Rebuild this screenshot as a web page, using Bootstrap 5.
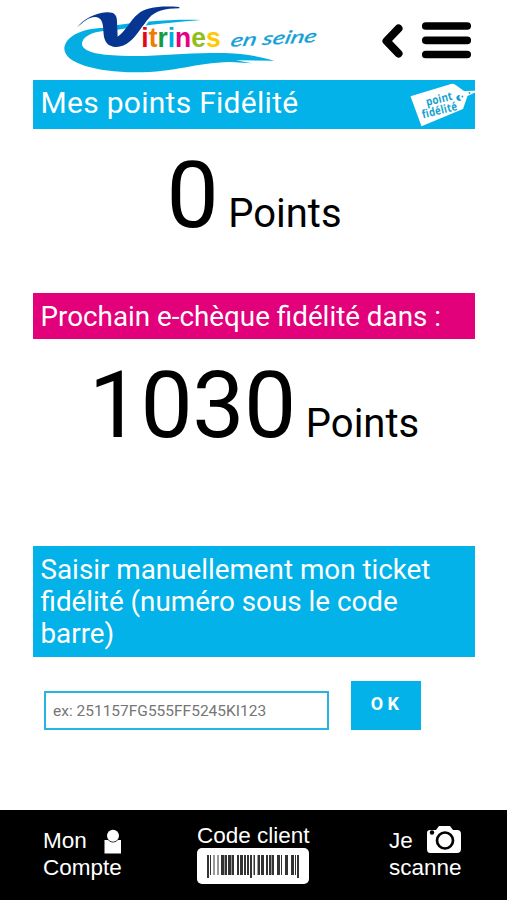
<!DOCTYPE html>
<html lang="fr">
<head>
<meta charset="utf-8">
<meta name="viewport" content="width=device-width, initial-scale=1">
<title>Vitrines en Seine</title>
<link href="https://cdn.jsdelivr.net/npm/bootstrap@5.3.0/dist/css/bootstrap.min.css" rel="stylesheet">
<style>
body{font-family:Roboto,sans-serif;color:#000;height:900px;overflow:hidden}
svg{display:block;flex:none}
.topbar{height:80px;padding-left:50px;padding-right:36px}
.brand-logo{margin-right:52px}
.page{padding:0 32px 0 33px}
.band{background:#02b2e8;color:#fff;font-size:27.8px;line-height:32px;padding:7.5px 0 0 7.5px}
.band-title{height:49px;font-size:30px;letter-spacing:.28px;padding-top:7px}
.band-pink{height:46px;margin-top:52px;background:#e3007b}
.band-form{height:111px;margin-top:95px}
.score{height:112px;line-height:112px;padding-top:11px}
.score-value{font-size:93px;margin-right:6px;letter-spacing:-.5px}
.score-unit{font-size:40px}
.ticket-form{padding:24px 0 0 11px}
.ticket-input{width:285px;height:39px;border:2px solid #25b5e0;border-radius:0;padding:0 7px;font-size:15.5px;color:#757575}
.ticket-input::placeholder{color:#757575;opacity:1}
.ok-btn{width:70px;height:49px;margin-left:22px;background:#02b2e8;color:#fff;border:0;border-radius:0;font-size:18px;font-weight:700;letter-spacing:4.4px;padding:0 0 4px 2px}
.ok-btn:hover{background:#0299c8;color:#fff}
.bottombar{height:90px;background:#000;color:#fff;font:22.5px/27px "Liberation Sans",Arial,sans-serif}
.bottombar a{color:#fff}
.nav-account{padding:17px 0 0 43px;width:197px}
.nav-code{width:192px;padding-top:12px}
.nav-code svg{margin-top:-2px}
.nav-scan{padding-top:17px}
.icon-person{margin:2px 0 0 -18px}
.icon-camera{margin:-2px 0 0 -36px}
</style>
<script src="https://cdn.jsdelivr.net/npm/bootstrap@5.3.0/dist/js/bootstrap.bundle.min.js"></script>
</head>
<body class="bg-white d-flex flex-column">
<header class="topbar d-flex align-items-start">
  <a href="#" class="brand-logo" aria-label="Vitrines en seine">
    <svg width="280" height="79" viewBox="0 0 840 237">
      <path fill="#04aee2" d="M165 84C85 84 43 116 43 147C45 190 138 216 255 217C384 217 431 188 540 186L606 190L558 181L673 182C602 163 560 158 493 159C393 158 312 172 213 167C145 166 96 154 96 132C96 110 125 96 165 92ZM198 76C260 66 365 57 453 60C388 66 299 72 198 90Z"/>
      <path d="M272 92L294 62" stroke="#fff" stroke-width="6"/>
      <path fill="#063592" d="M80 83C100 59 135 38 170 37C194 36 201 46 201 65L203 110C226 96 240 61 264 42C288 21 330 17 388 21V25C344 25 316 34 298 53C276 77 262 105 240 124C225 137 207 143 190 140C166 136 161 116 160 91C159 64 153 52 135 51C115 51 98 68 80 83Z"/>
      <text x="274" y="142" font-family="Liberation Sans,Arial,sans-serif" font-weight="700" font-size="84" textLength="238" lengthAdjust="spacingAndGlyphs"><tspan fill="#e3061a">i</tspan><tspan fill="#f17b08">t</tspan><tspan fill="#179b40">r</tspan><tspan fill="#00aee1">i</tspan><tspan fill="#e4007f">n</tspan><tspan fill="#91bd20">e</tspan><tspan fill="#fdc900">s</tspan></text>
      <text transform="translate(539 140) rotate(-3) skewX(-16)" font-family="Lato,sans-serif" font-style="italic" font-size="54" fill="#149fd6" stroke="#149fd6" stroke-width="1" textLength="258" lengthAdjust="spacingAndGlyphs">en seine</text>
    </svg>
  </a>
  <a href="#" aria-label="Retour"><svg width="22" height="80" viewBox="0 0 22 80"><path d="M16.5 28.5L4.5 41L16.5 53.5" fill="none" stroke="#000" stroke-width="8" stroke-linecap="round" stroke-linejoin="round"/></svg></a>
  <a href="#" class="ms-auto" aria-label="Menu"><svg width="50" height="80" viewBox="0 0 50 80"><path d="M4.8 26H46.2M4.8 40.3H46.2M4.8 54.5H46.2" stroke="#000" stroke-width="7.7" stroke-linecap="round"/></svg></a>
</header>

<main class="page flex-grow-1">
  <div class="band band-title d-flex justify-content-between">
    <span>Mes points Fidélité</span>
    <svg class="overflow-visible" width="66" height="42" viewBox="409 87 66 42">
      <path fill="#fff" d="M410.5 96.2L451 84Q453 83.3 455 84.5L464 91L475 90.7V92.5L467.5 96L463 109L421.5 126.3Z"/>
      <path d="M460 95A3 3 0 1 0 461.5 100Q458 98.5 460 95Z" fill="#149fd0"/><circle cx="462.4" cy="96.5" r=".9" fill="#149fd0"/><circle cx="469.5" cy="93" r=".9" fill="#149fd0"/>
      <g fill="#149fd0" font-family="Open Sans,sans-serif" font-weight="700" font-size="11.5"><text transform="translate(427 106) rotate(-14)" textLength="27" lengthAdjust="spacingAndGlyphs">point</text><text transform="translate(423 118.5) rotate(-14)" textLength="36" lengthAdjust="spacingAndGlyphs">fidélité</text></g>
    </svg>
  </div>
  <div class="score text-center"><span class="score-value">0</span> <span class="score-unit">Points</span></div>
  <div class="band band-pink">Prochain e-chèque fidélité dans :</div>
  <div class="score text-center"><span class="score-value">1030</span> <span class="score-unit">Points</span></div>
  <div class="band band-form">Saisir manuellement mon ticket fidélité (numéro sous le code barre)</div>
  <form class="ticket-form d-flex align-items-end">
    <input class="ticket-input form-control flex-grow-0" type="text" placeholder="ex: 251157FG555FF5245KI123" aria-label="Numéro de ticket">
    <button class="ok-btn btn" type="button">OK</button>
  </form>
</main>

<footer class="bottombar d-flex">
  <a href="#" class="nav-account text-decoration-none d-flex">
    <span>Mon<br>Compte</span>
    <svg class="icon-person" width="18" height="26" viewBox="0 0 18 26"><path fill="#fff" d="M.5 11H4Q9 16 14 11H17V24.5H.5Z"/><circle cx="9" cy="6.7" r="6" fill="#fff"/></svg>
  </a>
  <a href="#" class="nav-code text-decoration-none">
    <div class="text-nowrap">Code client</div>
    <svg width="113" height="38" viewBox="0 0 113 38">
      <rect y="1" width="112" height="36" rx="5" fill="#fff"/>
      <path fill="#333" d="M10 8h2v23h-2zM13 8h1v20h-1zM24 8h3v20h-3zM28 8h2v20h-2zM31 8h3v20h-3zM35 8h2v20h-2zM40 8h2v20h-2zM43 8h3v20h-3zM47 8h2v20h-2zM50 8h2v20h-2zM53 8h2v23h-2zM57 8h1v20h-1zM61 8h2v20h-2zM64 8h3v20h-3zM69 8h2v20h-2zM72 8h2v20h-2zM75 8h2v20h-2zM80 8h3v20h-3zM84 8h1v20h-1zM88 8h3v20h-3zM94 8h3v20h-3zM98 8h1v20h-1zM100 8h2v23h-2z"/>
      <path fill="#999" d="M16 8h2v20h-2zM20 8h2v20h-2zM27 8h1v20h-1zM34 8h1v20h-1zM56 8h1v20h-1zM60 8h1v20h-1zM74 8h1v20h-1z"/>
    </svg>
  </a>
  <a href="#" class="nav-scan text-decoration-none d-flex">
    <span>Je<br>scanne</span>
    <svg class="icon-camera" width="36" height="30" viewBox="0 0 36 30"><path fill="#fff" d="M4 5H10L13 1H24L27 5H31Q35 5 35 9V24Q35 28 31 28H4Q1 28 1 24V8Q1 5 4 5Z"/><circle cx="19" cy="15.5" r="8" fill="#fff" stroke="#000" stroke-width="2.7"/><circle cx="6" cy="7.5" r="2.2" fill="#000"/></svg>
  </a>
</footer>
</body>
</html>
